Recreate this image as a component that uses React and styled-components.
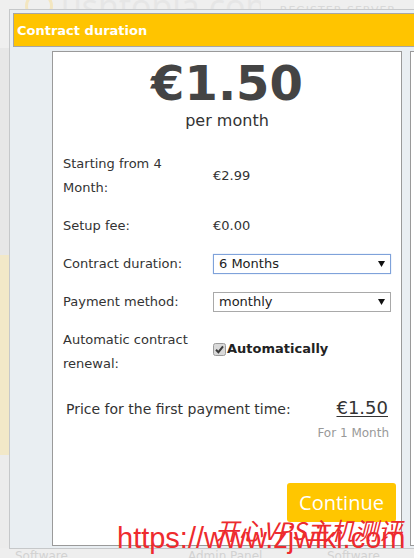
import React from "react";
import styled, { createGlobalStyle } from "styled-components";

const GlobalStyle = createGlobalStyle`
  html, body {
    margin: 0;
    padding: 0;
    background: #eeeeee;
    overflow: hidden;
  }
  body {
    font-family: "DejaVu Sans", Verdana, sans-serif;
    color: #333;
  }
`;

const Page = styled.div`
  position: relative;
  width: 414px;
  height: 558px;
  overflow: hidden;
  display: flex;
  flex-direction: column;
  background: #eeeeee;
`;

/* faded site behind the modal */
const SiteHeader = styled.div`
  height: 48px;
  flex: none;
  display: flex;
  align-items: flex-start;
  padding-left: 25px;
  background: #efefef;
`;

const LogoRing = styled.span`
  width: 22px;
  height: 22px;
  margin-top: -8px;
  border: 3px solid #f3e6c0;
  border-radius: 50%;
  flex: none;
`;

const LogoText = styled.span`
  width: 200px;
  flex: none;
  margin: -14px 0 0 8px;
  font-family: "Open Sans", sans-serif;
  font-size: 34px;
  line-height: 40px;
  color: #e6e6e6;
  white-space: nowrap;
  overflow: hidden;
`;

const RegisterLink = styled.span`
  margin: 4px 0 0 auto;
  padding-right: 18px;
  font-size: 11px;
  letter-spacing: 1px;
  color: #d8d8d8;
  white-space: nowrap;
`;

const SiteBody = styled.div`
  flex: 1;
  display: flex;
  flex-direction: column;
  width: 9px;
`;

const SideBand = styled.div`
  height: ${p => p.h}px;
  flex: ${p => (p.h ? "none" : 1)};
  background: ${p => p.color};
`;

const SiteFooter = styled.div`
  height: 10px;
  flex: none;
  display: grid;
  grid-template-columns: 173px 139px 1fr;
  padding-left: 15px;
  font-size: 12px;
  line-height: 20px;
  color: #d2d2d2;
  overflow: hidden;
`;

const FooterLink = styled.span`
  margin-top: -2px;
`;

/* modal */
const Modal = styled.div`
  position: absolute;
  top: 9px;
  left: 9px;
  width: 440px;
  height: 540px;
  box-sizing: border-box;
  border: 1px solid #c6c8ca;
  background: #e9eef2;
  padding: 3px 0 0 3px;
`;

const ModalHeader = styled.div`
  height: 34px;
  box-sizing: border-box;
  border: 1px solid #a6a6a6;
  background: #ffc400;
  display: flex;
  align-items: center;
  padding-left: 3px;
  font-weight: bold;
  font-size: 13px;
  color: #fff;
`;

const Slider = styled.div`
  display: flex;
  gap: 8px;
  margin-top: 4px;
  padding-left: 39px;
`;

const Card = styled.div`
  width: 350px;
  height: 495px;
  flex: none;
  box-sizing: border-box;
  border: 1px solid #9a9a9a;
  background: #fff;
  display: flex;
  flex-direction: column;
`;

const Price = styled.div`
  margin-top: 7px;
  text-align: center;
  font-weight: bold;
  font-size: 48px;
  line-height: 48px;
  color: #444;
`;

const PerMonth = styled.div`
  margin-top: 4px;
  text-align: center;
  font-size: 16px;
  line-height: 20px;
  color: #333;
`;

const Details = styled.div`
  margin-top: 21px;
  padding: 0 9px 0 10px;
  display: grid;
  grid-template-columns: 150px 1fr;
  row-gap: 14px;
  align-items: center;
  font-size: 13px;
  line-height: 24px;
`;

const Label = styled.div`
  padding-right: 12px;
  color: #333;
`;

const Value = styled.div`
  color: #333;
  padding-bottom: ${p => (p.raised ? "6px" : "0")};
  display: flex;
  align-items: center;
`;

const Select = styled.div`
  width: 178px;
  height: 20px;
  box-sizing: border-box;
  border: 1px solid ${p => (p.focused ? "#7fa2da" : "#a9a9a9")};
  box-shadow: ${p => (p.focused ? "0 0 1px #a8c2ee" : "none")};
  background: #fff;
  display: flex;
  align-items: center;
  justify-content: space-between;
  padding: 0 5px 0 5px;
  line-height: 18px;
  color: #222;
`;

const Check = styled.span`
  width: 13px;
  height: 13px;
  display: inline-flex;
  margin-right: 1px;
`;

const CheckLabel = styled.span`
  font-weight: bold;
  color: #222;
`;

const Summary = styled.div`
  margin-top: 20px;
  padding: 0 13px;
  display: flex;
  align-items: baseline;
  justify-content: space-between;
  line-height: 24px;
`;

const SummaryLabel = styled.span`
  font-size: 14px;
  color: #333;
`;

const SummaryPrice = styled.span`
  font-size: 18px;
  color: #333;
  text-decoration: underline;
  text-underline-offset: 2px;
`;

const SummaryNote = styled.div`
  margin-top: 3px;
  padding-right: 12px;
  text-align: right;
  font-size: 12px;
  line-height: 18px;
  color: #999;
`;

const Actions = styled.div`
  margin-top: 41px;
  padding-right: 5px;
  display: flex;
  justify-content: flex-end;
`;

const ContinueButton = styled.button`
  width: 109px;
  height: 39px;
  border: none;
  border-radius: 3px;
  background: #ffc600;
  color: #fff;
  font-family: "Open Sans", sans-serif;
  font-size: 20px;
  padding: 0;
  cursor: pointer;
`;

/* watermark over the shot */
const WatermarkUrl = styled.div`
  position: absolute;
  left: 117px;
  top: 523px;
  font-family: "Liberation Sans", Arial, sans-serif;
  font-size: 29px;
  line-height: 30px;
  color: #ee2b2e;
  white-space: nowrap;
`;

const WatermarkName = styled.div`
  position: absolute;
  left: 215px;
  top: 516px;
  font-family: "Noto Sans CJK SC", sans-serif;
  font-size: 24px;
  line-height: 28px;
  font-style: italic;
  color: #ec2a2d;
  white-space: nowrap;
`;

const Arrow = () => (
  <svg width="7" height="6" viewBox="0 0 7 6">
    <polygon points="0,0 7,0 3.5,6" fill="#111" />
  </svg>
);

const CheckIcon = () => (
  <svg width="13" height="13" viewBox="0 0 13 13">
    <rect x="0.5" y="0.5" width="12" height="12" rx="2" fill="#d9d9d9" stroke="#9b9b9b" />
    <path d="M3 6.8 L5.4 9.2 L10 3.4" fill="none" stroke="#3a3a3a" strokeWidth="2" />
  </svg>
);

const rows = [
  { label: "Starting from 4 Month:", value: "€2.99" },
  { label: "Setup fee:", value: "€0.00" },
];

export default function App() {
  return (
    <Page>
      <GlobalStyle />
      <SiteHeader>
        <LogoRing />
        <LogoText>ushtopia.com</LogoText>
        <RegisterLink>REGISTER SERVER</RegisterLink>
      </SiteHeader>
      <SiteBody>
        <SideBand h={207} color="#e7e7e7" />
        <SideBand h={200} color="#f2e8c8" />
        <SideBand color="#ececec" />
      </SiteBody>
      <SiteFooter>
        <FooterLink>Software</FooterLink>
        <FooterLink>Admin Panel</FooterLink>
        <FooterLink>Software</FooterLink>
      </SiteFooter>

      <Modal>
        <ModalHeader>Contract duration</ModalHeader>
        <Slider>
          <Card>
            <Price>€1.50</Price>
            <PerMonth>per month</PerMonth>
            <Details>
              {rows.map(r => (
                <React.Fragment key={r.label}>
                  <Label>{r.label}</Label>
                  <Value>{r.value}</Value>
                </React.Fragment>
              ))}
              <Label>Contract duration:</Label>
              <Value>
                <Select focused>
                  <span>6 Months</span>
                  <Arrow />
                </Select>
              </Value>
              <Label>Payment method:</Label>
              <Value>
                <Select>
                  <span>monthly</span>
                  <Arrow />
                </Select>
              </Value>
              <Label>Automatic contract renewal:</Label>
              <Value raised>
                <Check>
                  <CheckIcon />
                </Check>
                <CheckLabel>Automatically</CheckLabel>
              </Value>
            </Details>
            <Summary>
              <SummaryLabel>Price for the first payment time:</SummaryLabel>
              <SummaryPrice>€1.50</SummaryPrice>
            </Summary>
            <SummaryNote>For 1 Month</SummaryNote>
            <Actions>
              <ContinueButton>Continue</ContinueButton>
            </Actions>
          </Card>
          <Card />
        </Slider>
      </Modal>

      <WatermarkName>开心VPS主机测评</WatermarkName>
      <WatermarkUrl>https://www.zjwiki.com</WatermarkUrl>
    </Page>
  );
}
